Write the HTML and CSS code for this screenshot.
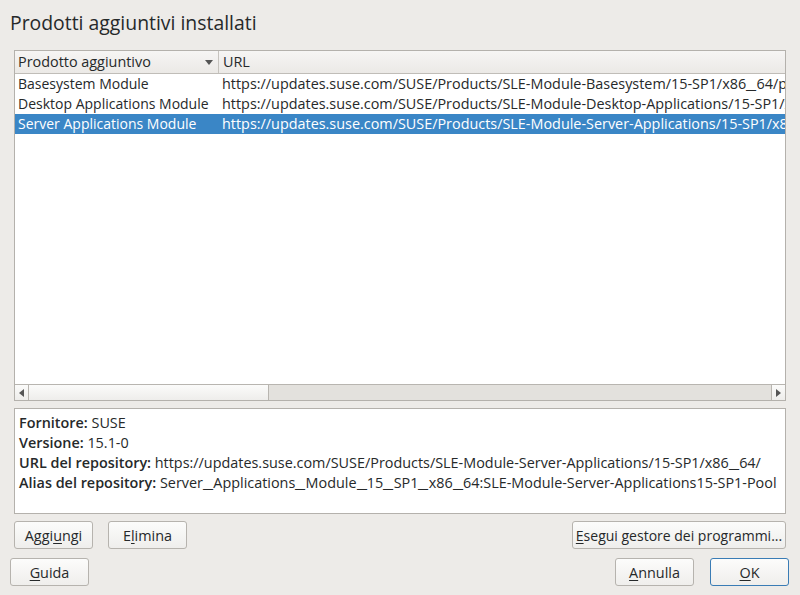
FILE: index.html
```html
<!DOCTYPE html>
<html>
<head>
<meta charset="utf-8">
<link rel="stylesheet" href="styles.css">
</head>
<body>
<div class="dialog">
  <h1 class="title">Prodotti aggiuntivi installati</h1>
  <div class="table">
    <div class="thead">
      <div class="th c1"><span>Prodotto aggiuntivo</span><svg class="sort" width="8" height="5" viewBox="0 0 8 5"><path d="M0 0H8L4 5Z" fill="#555"/></svg></div>
      <div class="th c2">URL</div>
    </div>
    <div class="tbody">
      <div class="tr"><div class="td c1">Basesystem Module</div><div class="td c2">https://updates.suse.com/SUSE/Products/SLE-Module-Basesystem/15-SP1/x86<span class="us">_</span>64/product/</div></div>
      <div class="tr"><div class="td c1">Desktop Applications Module</div><div class="td c2">https://updates.suse.com/SUSE/Products/SLE-Module-Desktop-Applications/15-SP1/x86<span class="us">_</span>64/product/</div></div>
      <div class="tr sel"><div class="td c1">Server Applications Module</div><div class="td c2">https://updates.suse.com/SUSE/Products/SLE-Module-Server-Applications/15-SP1/x86<span class="us">_</span>64/product/</div></div>
    </div>
    <div class="hscroll">
      <div class="arrow"><svg width="5" height="8" viewBox="0 0 5 8"><path d="M5 0V8L0 4Z" fill="#555"/></svg></div>
      <div class="trough"><div class="thumb"></div></div>
      <div class="arrow"><svg width="5" height="8" viewBox="0 0 5 8"><path d="M0 0V8L5 4Z" fill="#555"/></svg></div>
    </div>
  </div>
  <div class="info">
    <div><b>Fornitore:</b> SUSE</div>
    <div><b>Versione:</b> 15.1-0</div>
    <div><b>URL del repository:</b> https://updates.suse.com/SUSE/Products/SLE-Module-Server-Applications/15-SP1/x86<span class="us">_</span>64/</div>
    <div><b>Alias del repository:</b> Server<span class="us">_</span>Applications<span class="us">_</span>Module<span class="us">_</span>15<span class="us">_</span>SP1<span class="us">_</span>x86<span class="us">_</span>64:SLE-Module-Server-Applications15-SP1-Pool</div>
  </div>
  <div class="row1">
    <button class="btn">Aggi<u>u</u>ngi</button>
    <button class="btn">E<u>l</u>imina</button>
    <span class="spacer"></span>
    <button class="btn wide"><u>E</u>segui gestore dei programmi...</button>
  </div>
  <div class="row2">
    <button class="btn"><u>G</u>uida</button>
    <span class="spacer"></span>
    <button class="btn"><u>A</u>nnulla</button>
    <button class="btn ok"><u>O</u>K</button>
  </div>
</div>
</body>
</html>
```

FILE: styles.css
```css
html, body {
  margin: 0;
  padding: 0;
  background: #edebe8;
}
body {
  width: 800px;
  height: 595px;
  overflow: hidden;
  font-family: "Open Sans", "Noto Sans", sans-serif;
  font-size: 14.4px;
  color: #26292a;
}
.dialog {
  display: flex;
  flex-direction: column;
}
.title {
  margin: 8px 0 0 10px;
  font-size: 19.4px;
  font-weight: normal;
  line-height: 30px;
  height: 30px;
  color: #26292a;
}
.us {
  display: inline-block;
  transform: scaleX(1.6);
  transform-origin: left center;
  margin-right: 4px;
}
.table {
  margin: 12px 14px 0 14px;
  height: 349px;
  border: 1px solid #b4b1ac;
  background: #fff;
  display: flex;
  flex-direction: column;
}
.thead {
  display: flex;
  height: 22px;
  background: linear-gradient(#f6f5f4, #ebe9e6);
  border-bottom: 1px solid #c0bdb8;
}
.th {
  display: flex;
  align-items: center;
  line-height: 22px;
  padding-left: 3px;
  box-sizing: border-box;
}
.th.c1 {
  width: 204px;
  border-right: 1px solid #c6c3be;
  justify-content: space-between;
  padding-right: 5px;
}
.sort { display: block; }
.th.c2 { flex: 1; padding-left: 4px; }
.tbody {
  flex: 1;
  overflow: hidden;
}
.tr {
  display: flex;
  height: 20px;
  line-height: 20px;
  white-space: nowrap;
}
.td.c1 {
  width: 204px;
  padding-left: 3px;
  box-sizing: border-box;
  flex: none;
  font-size: 14px;
}
.td.c2 {
  padding-left: 3px;
  flex: none;
}
.tr.sel {
  background: #3a86c6;
  color: #fff;
}
.hscroll {
  height: 15px;
  display: flex;
  border-top: 1px solid #b8b5b0;
  background: #e3e1dd;
}
.arrow {
  width: 13px;
  display: flex;
  align-items: center;
  justify-content: center;
  background: linear-gradient(#fbfbfa, #eeedeb);
}
.arrow:first-child { border-right: 1px solid #b8b5b0; }
.arrow:last-child { border-left: 1px solid #b8b5b0; }
.trough {
  flex: 1;
  display: flex;
}
.thumb {
  width: 239px;
  background: linear-gradient(#fbfbfa, #eeedeb);
  border-right: 1px solid #b8b5b0;
}
.info {
  margin: 7px 14px 0 14px;
  height: 100px;
  border: 1px solid #b4b1ac;
  background: #fff;
  padding: 4px 0 0 4px;
  line-height: 20px;
  white-space: nowrap;
  overflow: hidden;
}
.info b { font-weight: 600; }
.row1, .row2 {
  display: flex;
  align-items: center;
}
.row1 {
  margin: 7px 14px 0 14px;
  gap: 15px;
}
.row2 {
  margin: 9px 11px 0 10px;
  gap: 16px;
}
.spacer { flex: 1; }
.btn {
  font-family: inherit;
  font-size: 14.4px;
  color: #26292a;
  height: 28px;
  width: 79px;
  padding: 0;
  border: 1px solid #b6b3ae;
  border-radius: 3px;
  background: linear-gradient(#fcfcfb, #efeeec);
  box-sizing: border-box;
  white-space: nowrap;
}
.btn.wide { width: 214px; font-size: 14px; }
.btn.ok {
  border-color: #3a7cb5;
}
.btn u { text-decoration: underline; text-underline-offset: 2px; }
```
